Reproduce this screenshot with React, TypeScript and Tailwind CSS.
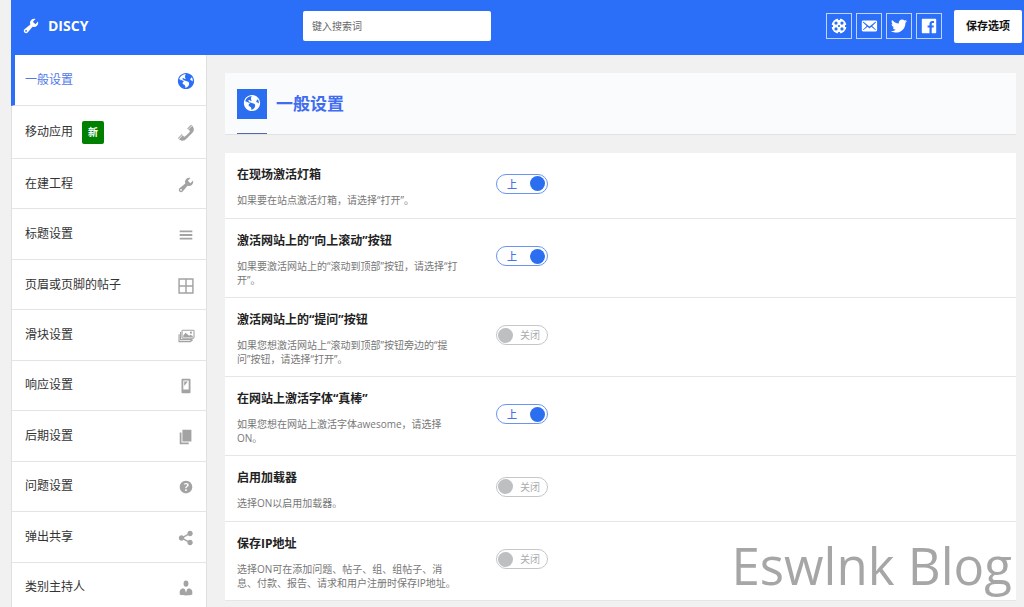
import { useState } from 'react';
import type { ReactNode } from 'react';

const icons: Record<string, ReactNode> = {
  site: (
    <path
      transform="translate(1 1)"
      d="M9 0C4.03 0 0 4.03 0 9c0 4.97 4.03 9 9 9s9-4.03 9-9c0-4.97-4.03-9-9-9zm3.46 11.95c0 1.47-.8 3.3-4.06 4.7.3-4.17-2.52-3.69-3.2-5 .126-1.1.804-2.063 1.8-2.55-1.552-.266-3-.96-4.18-2 .05.47.28.904.64 1.21-.782-.295-1.458-.817-1.94-1.5.977-3.225 3.883-5.482 7.25-5.63-.84 1.38-1.5 4.13 0 5.57C7.23 7 6.26 5 5.41 5.79c-1.13 1.06.33 2.51 3.42 3.08 3.29.59 3.66 1.58 3.63 3.08zm1.34-4c-.32-1.11.62-2.23 1.69-3.14.97 1.55 1.29 3.384.91 5.18.02-1-.42-.96-2.6-2.04z"
    />
  ),
  tools: (
    <path d="M16.68 9.77c-1.34 1.34-3.3 1.67-4.95.99l-5.41 6.52c-.99.99-2.59.99-3.58 0s-.99-2.59 0-3.57l6.52-5.42c-.68-1.65-.35-3.61.99-4.95 1.28-1.28 3.12-1.62 4.72-1.06l-2.89 2.89 2.82 2.82 2.86-2.87c.53 1.58.18 3.39-1.08 4.65zM3.81 16.21c.4.39 1.04.39 1.43 0 .4-.4.4-1.04 0-1.43-.39-.4-1.03-.4-1.43 0-.39.39-.39 1.03 0 1.43z" />
  ),
  phone: (
    <path d="M12.06 6l-.21-.2c-.52-.54-.43-.79.08-1.3l2.72-2.75c.81-.82.96-1.21 1.73-.48l.21.2L12.06 6zm.53.45l4.4-4.4c.7.94 2.34 3.47 1.53 5.34-.73 1.67-1.09 1.75-2 3-1.85 2.11-4.18 4.37-6 6.07-1.26.91-1.31 1.33-3 2-1.8.71-4.4-.89-5.38-1.56l4.4-4.4 1.18 1.62c.34.46 1.2-.06 1.8-.66 1.04-1.05 3.18-3.18 4-4.07.59-.59 1.12-1.45.66-1.8zM1.57 16.5l-.21-.21c-.68-.74-.29-.9.52-1.7l2.74-2.72c.51-.49.75-.6 1.27-.11l.2.21-4.52 4.53z" />
  ),
  menu: <path d="M17 7V5H3v2h14zm0 4V9H3v2h14zm0 4v-2H3v2h14z" />,
  table: <path fillRule="evenodd" d="M1.5 1.5h17v17h-17zM3.100 3.100v6.100h6.100V3.100zm7.700 0v6.100h6.100V3.100zM3.100 10.800v6.100h6.100v-6.100zm7.700 0v6.100h6.100v-6.100z" />,
  images: (
    <>
      <path fillRule="evenodd" d="M6.5 3h11.500q1.500 0 1.500 1.500V11.500q0 1.500-1.500 1.500H6.500Q5 13 5 11.500V4.500Q5 3 6.500 3zm-.3 1.200v7.600h12.100V4.200z" />
      <path d="M7 11V9.500l2.500-3 4 3.200 1.500-1.200 2.500 1.500v1z" />
      <circle cx="15.500" cy="6.300" r="1.200" />
      <path d="M4 5.500v8.500h11.500l2-1M2.300 8v8.200h12.500l2.500-2" fill="none" stroke="currentColor" strokeWidth="1.300" />
    </>
  ),
  smartphone: <path d="M6 2h8c.55 0 1 .45 1 1v14c0 .55-.45 1-1 1H6c-.55 0-1-.45-1-1V3c0-.55.45-1 1-1zm7 12V4H7v10h6zM8 5h4l-4 5V5z" />,
  page: <path d="M6 15V2h10v13H6zm-1 1h8v2H3V5h2v11z" />,
  help: (
    <path d="M17 10c0-3.87-3.14-7-7-7-3.87 0-7 3.13-7 7s3.13 7 7 7c3.86 0 7-3.13 7-7zm-6.3 1.48H9.14v-.43c0-.38.08-.7.24-.98s.46-.57.88-.89c.41-.29.68-.53.81-.71.14-.18.2-.39.2-.62 0-.25-.09-.44-.28-.58-.19-.13-.45-.19-.79-.19-.58 0-1.25.15-2 .46l-.64-1.28c.87-.49 1.8-.74 2.77-.74.81 0 1.45.2 1.92.58.48.39.71.91.71 1.55 0 .43-.09.8-.29 1.11-.19.32-.57.67-1.11 1.06-.38.28-.61.49-.71.63-.1.15-.15.34-.15.57v.46zm-1.47 2.74c-.18-.17-.27-.42-.27-.73 0-.33.08-.58.26-.75s.43-.25.77-.25c.32 0 .57.09.75.26s.27.42.27.74c0 .3-.09.55-.27.72-.18.18-.43.27-.75.27-.33 0-.58-.09-.76-.26z" />
  ),
  share: (
    <path d="M14.5 12c1.66 0 3 1.34 3 3s-1.34 3-3 3-3-1.34-3-3c0-.24.03-.46.09-.69l-4.38-2.3c-.55.61-1.33.99-2.21.99-1.66 0-3-1.34-3-3s1.34-3 3-3c.88 0 1.66.39 2.21.99l4.38-2.3c-.06-.23-.09-.45-.09-.69 0-1.66 1.34-3 3-3s3 1.34 3 3-1.34 3-3 3c-.88 0-1.66-.39-2.21-.99l-4.38 2.3c.06.23.09.45.09.69s-.03.46-.09.69l4.38 2.3c.55-.61 1.33-.99 2.21-.99z" />
  ),
  businessman: (
    <>
      <ellipse cx="10" cy="5.200" rx="2.700" ry="3.400" />
      <path d="M6.500 10.300l2.300 1 1.200 4 1.200-4 2.300-1c2.500.9 3.500 2.200 3.500 4.200v2.700c-2 .7-4.500 1-7 1s-5-.3-7-1v-2.700c0-2 1-3.300 3.500-4.200z" />
    </>
  ),
  sos: (
    <>
      <circle cx="10" cy="10" r="8.300" />
      <g fill="#2b6ff8">
        <circle cx="6.700" cy="6.700" r="1.800" />
        <circle cx="13.300" cy="6.700" r="1.800" />
        <circle cx="6.700" cy="13.300" r="1.800" />
        <circle cx="13.300" cy="13.300" r="1.800" />
        <circle cx="10" cy="10" r="1.200" />
        <path d="M9 1h2v2.300H9zM9 16.700h2V19H9zM1 9h2.300v2H1zM16.700 9H19v2h-2.300z" />
      </g>
    </>
  ),
  email: (
    <path d="M19 14.5v-9c0-.83-.67-1.5-1.5-1.5H3.49c-.83 0-1.5.67-1.5 1.5v9c0 .83.67 1.5 1.5 1.5H17.5c.83 0 1.5-.67 1.5-1.5zm-1.31-9.11c.33.33.15.67-.03.84L13.6 9.95l3.9 4.06c.12.14.2.36.06.51-.13.16-.43.15-.56.05l-4.37-3.73-2.14 1.95-2.13-1.95-4.37 3.73c-.13.1-.43.11-.56-.05-.14-.15-.06-.37.06-.51l3.9-4.06-4.06-3.72c-.18-.17-.36-.51-.03-.84s.67-.17.95.07l6.24 5.04 6.25-5.04c.28-.24.62-.4.95-.07z" />
  ),
  twitter: (
    <path d="M18.94 4.46c-.49.73-1.11 1.38-1.83 1.9.01.15.01.31.01.47 0 4.85-3.69 10.44-10.43 10.44-2.07 0-4-.61-5.63-1.65.29.03.58.05.88.05 1.72 0 3.3-.59 4.55-1.57-1.6-.03-2.95-1.09-3.42-2.55.22.04.45.07.69.07.33 0 .66-.05.96-.13-1.67-.34-2.94-1.82-2.94-3.6v-.04c.5.27 1.06.44 1.66.46-.98-.66-1.63-1.78-1.63-3.06 0-.67.18-1.3.5-1.84 1.81 2.22 4.51 3.68 7.56 3.83-.06-.27-.1-.55-.1-.84 0-2.02 1.65-3.66 3.67-3.66 1.06 0 2.01.44 2.68 1.16.83-.17 1.62-.47 2.33-.89-.28.85-.86 1.57-1.62 2.02.75-.08 1.45-.28 2.11-.57z" />
  ),
  facebook: (
    <path d="M2.89 2h14.23c.49 0 .88.39.88.88v14.24c0 .48-.39.88-.88.88h-4.08v-6.2h2.08l.31-2.41h-2.39V7.85c0-.7.2-1.18 1.2-1.18h1.28V4.51c-.22-.03-.98-.09-1.86-.09-1.85 0-3.11 1.12-3.11 3.19v1.78H8.46v2.41h2.09V18H2.89c-.49 0-.89-.4-.89-.88V2.88c0-.49.4-.88.89-.88z" />
  ),
};

function Icon({ name, className = 'size-[18px]' }: { name: string; className?: string }) {
  return (
    <svg viewBox="0 0 20 20" fill="currentColor" aria-hidden="true" className={className}>
      {icons[name]}
    </svg>
  );
}

const topItems = [
  { label: '一般设置', icon: 'site', active: true },
  { label: '移动应用', icon: 'phone', badge: '新' },
];

const navItems = [
  { label: '在建工程', icon: 'tools' },
  { label: '标题设置', icon: 'menu' },
  { label: '页眉或页脚的帖子', icon: 'table' },
  { label: '滑块设置', icon: 'images' },
  { label: '响应设置', icon: 'smartphone' },
  { label: '后期设置', icon: 'page' },
  { label: '问题设置', icon: 'help' },
  { label: '弹出共享', icon: 'share' },
  { label: '类别主持人', icon: 'businessman' },
];

const socials = [
  { label: 'Support', icon: 'sos' },
  { label: 'Email', icon: 'email' },
  { label: 'Twitter', icon: 'twitter' },
  { label: 'Facebook', icon: 'facebook' },
];

const options = [
  { id: 'lightbox', title: '在现场激活灯箱', desc: '如果要在站点激活灯箱，请选择“打开”。', on: true },
  { id: 'go-up', title: '激活网站上的“向上滚动”按钮', desc: '如果要激活网站上的“滚动到顶部”按钮，请选择“打\n开”。', on: true },
  { id: 'ask', title: '激活网站上的“提问”按钮', desc: '如果您想激活网站上“滚动到顶部”按钮旁边的“提\n问”按钮，请选择“打开”。', on: false },
  { id: 'awesome', title: '在网站上激活字体“真棒”', desc: '如果您想在网站上激活字体awesome，请选择\nON。', on: true },
  { id: 'loader', title: '启用加载器', desc: '选择ON以启用加载器。', on: false },
  { id: 'ip', title: '保存IP地址', desc: '选择ON可在添加问题、帖子、组、组帖子、消\n息、付款、报告、请求和用户注册时保存IP地址。', on: false },
];

type Item = { label: string; icon: string; active?: boolean; badge?: string };

function NavLink({ item }: { item: Item }) {
  return (
    <a
      href="#"
      className={`flex h-full items-center border-b border-l border-b-[#e4e4e4] pr-[11px] text-xs ${
        item.active ? 'border-l-4 border-l-[#2b6ff8] pl-[10px] text-[#5078ea]' : 'border-l-[#e0e0e0] pl-[13px] text-[#333]'
      }`}
    >
      {item.label}
      {item.badge && (
        <span className="ml-[9px] rounded-xs bg-[#008000] px-[6px] py-1 text-[10px] leading-[15px] font-bold text-white">{item.badge}</span>
      )}
      <span className={`ml-auto pt-[2px] ${item.active ? 'text-[#2b6ff8]' : 'text-[#a3a3a3]'}`}>
        <Icon name={item.icon} />
      </span>
    </a>
  );
}

function Toggle({ id, label, defaultOn }: { id: string; label: string; defaultOn: boolean }) {
  const [on, setOn] = useState(defaultOn);

  return (
    <label
      htmlFor={id}
      className={`flex h-5 w-[52px] cursor-pointer items-center justify-between rounded-full border bg-white text-[10px] leading-none ${
        on ? 'border-[#6b93f0] pr-[2px] pl-[10px] font-medium text-[#4a73e6]' : 'border-[#c4c6c8] pr-[7px] pl-px text-[#a9abad]'
      }`}
    >
      <input id={id} type="checkbox" role="switch" aria-label={label} checked={on} onChange={() => setOn(!on)} className="sr-only" />
      {on && <span>上</span>}
      <span className={`size-[15px] rounded-full ${on ? 'bg-[#2b6ff0]' : 'bg-[#bdbfc1]'}`} />
      {!on && <span>关闭</span>}
    </label>
  );
}

export default function App() {
  return (
    <div className="min-h-screen bg-[#f1f1f1] pl-[11px] font-['Open_Sans','Noto_Sans_CJK_SC',sans-serif]">
      {/* Header */}
      <header className="flex h-[55px] items-center bg-[#2b6ff8] pr-[2px] pb-[3px] pl-[11px] text-white">
        <div className="flex w-[281px] items-center gap-2">
          <Icon name="tools" />
          <h1 className="text-sm font-bold">DISCY</h1>
        </div>
        <input
          type="search"
          aria-label="键入搜索词"
          placeholder="键入搜索词"
          className="h-[30px] w-[188px] rounded-xs bg-white px-[9px] text-[10px] text-[#444] placeholder:text-[#666]"
        />
        <div className="ml-auto flex items-center gap-1">
          {socials.map((s) => (
            <a key={s.icon} href="#" aria-label={s.label} className="flex size-[26px] items-center justify-center border border-white/70">
              <Icon name={s.icon} />
            </a>
          ))}
        </div>
        <button type="button" className="ml-3 h-[33px] rounded-xs bg-white px-3 text-[11px] font-bold text-[#111]">
          保存选项
        </button>
      </header>

      <div className="flex">
        {/* Sidebar */}
        <aside className="w-[196px] shrink-0 border-r border-[#e0e0e0] bg-white">
          <nav>
            <ul>
              {topItems.map((item) => (
                <li key={item.label} className={item.badge ? 'h-[53px]' : 'h-[51px]'}>
                  <NavLink item={item} />
                </li>
              ))}
            </ul>
            <ul className="grid min-h-[454px] auto-rows-fr">
              {navItems.map((item) => (
                <li key={item.label}>
                  <NavLink item={item} />
                </li>
              ))}
            </ul>
          </nav>
        </aside>

        {/* Content */}
        <main className="min-w-0 flex-1 pt-[18px] pr-2 pl-[18px]">
          <div className="border-b border-[#e2e2e2] bg-[#f9fbfd] px-3 pt-4">
            <div className="flex items-start gap-[9px]">
              <div className="border-b border-[#5468b4] pb-[14px]">
                <div className="flex size-[30px] items-center justify-center bg-[#2b6ff0] pb-[2px] text-white">
                  <Icon name="site" />
                </div>
              </div>
              <h2 className="text-[17px] leading-[30px] font-bold text-[#3f6cf0]">一般设置</h2>
            </div>
          </div>

          <div className="mt-[18px] bg-white">
            {options.map((o) => (
              <div key={o.id} className="grid min-h-[66px] grid-cols-[259px_1fr] border-b border-[#e6e6e6] px-3">
                <div className="pt-[13px] pb-[10px]">
                  <h3 className="text-xs leading-[18px] font-bold text-[#222]">{o.title}</h3>
                  <p className="mt-[9px] text-[10px] leading-[14px] whitespace-pre-line text-[#777]">{o.desc}</p>
                </div>
                <div className="flex items-center pb-1">
                  <Toggle id={o.id} label={o.title} defaultOn={o.on} />
                </div>
              </div>
            ))}
          </div>
        </main>
      </div>

      <div className="pointer-events-none fixed right-3 bottom-2 text-[51px] leading-[68px] text-[#a6a6a6]">Eswlnk Blog</div>
    </div>
  );
}
